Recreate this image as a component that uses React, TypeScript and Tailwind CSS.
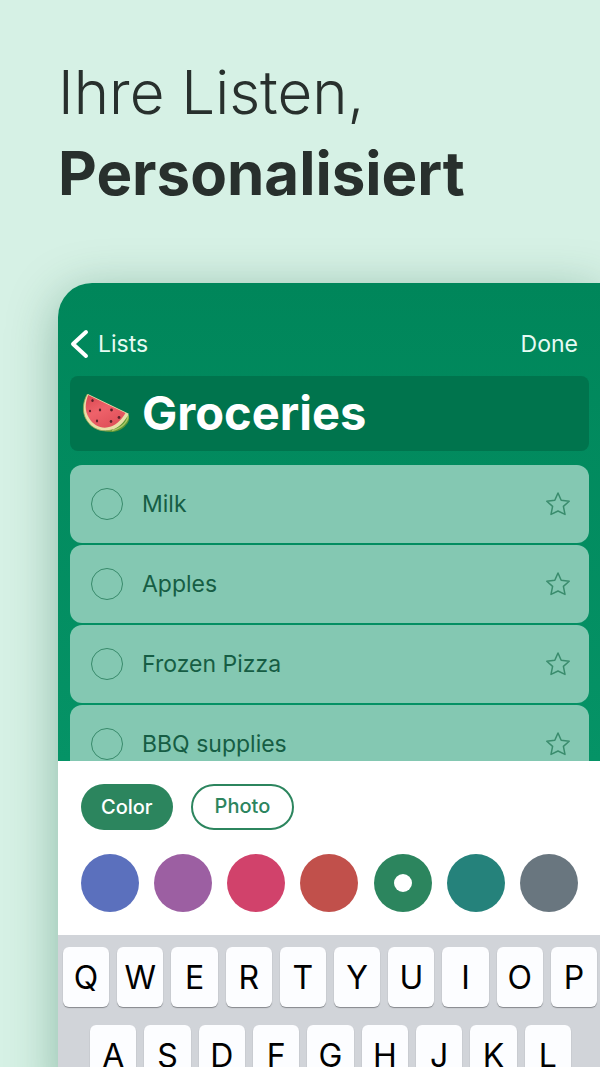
import React, { useState } from "react";

interface Swatch {
  name: string;
  className: string;
}

const items = ["Milk", "Apples", "Frozen Pizza", "BBQ supplies"];

const swatches: Swatch[] = [
  { name: "Blue", className: "bg-[#5b70bd]" },
  { name: "Purple", className: "bg-[#9c5fa2]" },
  { name: "Pink", className: "bg-[#d1426b]" },
  { name: "Red", className: "bg-[#c1504b]" },
  { name: "Green", className: "bg-[#2c855e]" },
  { name: "Teal", className: "bg-[#25827b]" },
  { name: "Gray", className: "bg-[#69767f]" },
];

const topKeys = "QWERTYUIOP".split("");
const homeKeys = "ASDFGHJKL".split("");

const Watermelon: React.FC = () => (
  <svg viewBox="0 1 48 40" className="w-12 h-10 shrink-0" aria-hidden="true">
    <defs>
      <linearGradient id="flesh" x1="0" y1="0" x2="0.6" y2="1">
        <stop offset="0" stopColor="#d8464f" />
        <stop offset="0.5" stopColor="#ee626a" />
        <stop offset="1" stopColor="#e0505a" />
      </linearGradient>
    </defs>
    <path
      d="M44 20.500C48.500 23 48 28 44 32C39 38.500 30 40.500 22 38C30 38 38 32 44 20.500Z"
      fill="#5f9636"
    />
    <path
      d="M46 22C46.500 28 40 35.500 30 37.500"
      fill="none"
      stroke="#a9c765"
      strokeWidth="1.500"
    />
    <path
      d="M5.500 0.800C1 8 -0.500 19 4.500 27C10 36.500 21 40 31 36.500C38.500 33.500 43.500 27.500 46.800 20.800Z"
      fill="#e9dfa8"
    />
    <path
      d="M5.500 0.800C1 8 -0.500 19 4.500 27C10 36.500 21 40 31 36.500"
      fill="none"
      stroke="#8da450"
      strokeWidth="0.800"
    />
    <path
      d="M6.200 2C3 10 2.500 18 7 25C12 33.500 21 36.500 29 33.500C35.500 31 40 26 43.500 20Z"
      fill="url(#flesh)"
    />
    <g fill="#5a2029">
      <ellipse cx="10.500" cy="7.500" rx="1.200" ry="1.500" />
      <ellipse cx="8" cy="18" rx="1.100" ry="1.300" />
      <ellipse cx="18" cy="17" rx="1.200" ry="1.400" />
      <ellipse cx="29.500" cy="17" rx="1.400" ry="1.400" />
      <ellipse cx="15" cy="28" rx="1.100" ry="1.400" />
      <ellipse cx="29" cy="28.500" rx="1.300" ry="1.400" />
      <ellipse cx="37" cy="24.500" rx="1.400" ry="1.400" />
    </g>
  </svg>
);

const Star: React.FC = () => (
  <svg
    viewBox="0 0 26 26"
    className="size-[26px]"
    fill="none"
    stroke="currentColor"
    strokeWidth="1.500"
    strokeLinejoin="round"
    aria-hidden="true"
  >
    <path d="M13 2L16.200 9.200L24.200 10.200L18.400 15.400L20 23.400L13 20L6 23.400L7.600 15.400L1.800 10.200L9.800 9.200Z" />
  </svg>
);

const Key: React.FC<{ label: string }> = ({ label }) => (
  <button
    type="button"
    className="flex-1 h-[60px] pt-0.5 rounded-md bg-[#fcfdff] text-black text-[32px] leading-none shadow-[0_1px_1px_#85888c]"
  >
    {label}
  </button>
);

const App: React.FC = () => {
  const [title, setTitle] = useState<string>("Groceries");
  const [done, setDone] = useState<string[]>([]);
  const [color, setColor] = useState<string>("Green");

  const toggle = (item: string) => {
    setDone((prev) =>
      prev.includes(item) ? prev.filter((i) => i !== item) : [...prev, item]
    );
  };

  return (
    <div className="h-screen overflow-hidden bg-[#d6f1e5] pl-[58px] pt-[52px] font-[Inter,sans-serif]">
      <h1 className="text-6xl leading-[81px] text-[#28302d]">
        <span className="block font-light">Ihre Listen,</span>
        <span className="block font-bold">Personalisiert</span>
      </h1>

      <main className="mt-[69px] rounded-tl-[34px] shadow-[0_10px_50px_rgba(0,80,50,0.35)]">
        <section className="rounded-tl-[34px] bg-linear-to-b from-[#00865a] to-[#059366] pt-10 pl-3 pr-[11px]">
          <header className="flex items-center justify-between h-[42px] pr-[11px] text-[23px] text-[#e6fbf3]">
            <button type="button" className="flex items-center gap-2">
              <svg
                viewBox="0 0 20 30"
                className="w-5 h-[30px]"
                fill="none"
                stroke="white"
                strokeWidth="4"
                strokeLinecap="round"
                strokeLinejoin="round"
                aria-hidden="true"
              >
                <path d="M16 3L3 15L16 27" />
              </svg>
              Lists
            </button>
            <button type="button">Done</button>
          </header>

          <label className="mt-[11px] flex items-center gap-3 h-[75px] rounded-lg bg-[#00744d] pl-3 pr-4">
            <Watermelon />
            <input
              aria-label="List name"
              value={title}
              onChange={(e) => setTitle(e.target.value)}
              className="flex-1 min-w-0 bg-transparent text-[47px] font-bold text-white outline-none"
            />
          </label>

          <ul className="mt-[14px] h-[296px] overflow-hidden flex flex-col gap-0.5">
            {items.map((item) => (
              <li
                key={item}
                className="flex shrink-0 items-center h-[78px] rounded-xl bg-[#84c8b2] pl-[21px] pr-[18px]"
              >
                <label className="flex flex-1 items-center gap-[19px] text-[23px] text-[#165d44]">
                  <input
                    type="checkbox"
                    checked={done.includes(item)}
                    onChange={() => toggle(item)}
                    className="appearance-none size-8 rounded-full border border-[#388a6b] checked:bg-[#388a6b]"
                  />
                  {item}
                </label>
                <button
                  type="button"
                  aria-label={`Mark ${item} as important`}
                  className="text-[#3a8c6d]"
                >
                  <Star />
                </button>
              </li>
            ))}
          </ul>
        </section>

        <section className="bg-white py-[23px] pl-[23px] pr-[22px]">
          <div className="flex gap-[18px] text-xl">
            <button
              type="button"
              className="h-[46px] px-5 rounded-full bg-[#2c855e] text-white font-medium"
            >
              Color
            </button>
            <button
              type="button"
              className="h-[46px] px-[22px] pb-0.5 rounded-full border-2 border-[#2c855e] text-[#2c855e] font-medium"
            >
              Photo
            </button>
          </div>

          <div className="mt-6 flex justify-between">
            {swatches.map((s) => (
              <label
                key={s.name}
                className={`grid place-items-center size-[58px] rounded-full ${s.className}`}
              >
                <input
                  type="radio"
                  name="color"
                  aria-label={s.name}
                  checked={color === s.name}
                  onChange={() => setColor(s.name)}
                  className="appearance-none size-[18px] rounded-full checked:bg-white"
                />
              </label>
            ))}
          </div>
        </section>

        <section className="bg-[#d1d4d9] pt-3 pb-4 flex flex-col gap-[18px]">
          <div className="flex gap-2 pl-[5px] pr-[3px]">
            {topKeys.map((k) => (
              <Key key={k} label={k} />
            ))}
          </div>
          <div className="flex gap-2 pl-8 pr-[29px]">
            {homeKeys.map((k) => (
              <Key key={k} label={k} />
            ))}
          </div>
        </section>
      </main>
    </div>
  );
};

export default App;
